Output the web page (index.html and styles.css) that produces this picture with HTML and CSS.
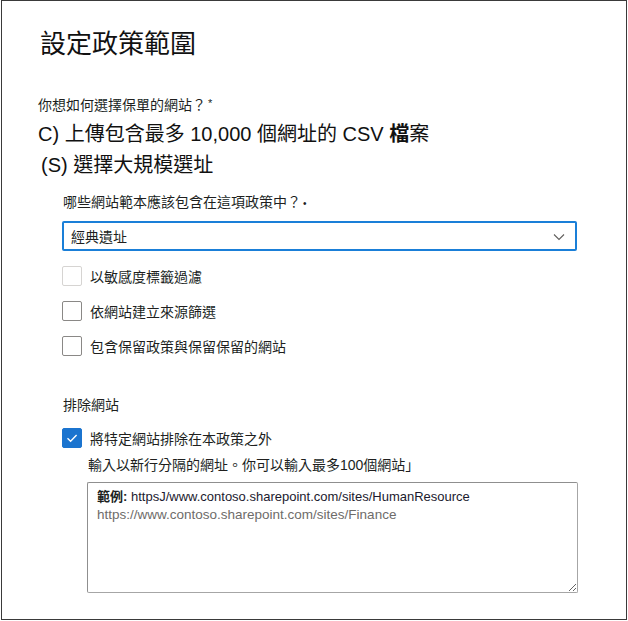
FILE: index.html
```html
<!DOCTYPE html>
<html lang="zh-Hant">
<head>
<meta charset="utf-8">
<title>設定政策範圍</title>
<link rel="stylesheet" href="styles.css">
</head>
<body>
<div class="frame">
  <h1 class="title">設定政策範圍</h1>
  <div class="question">你想如何選擇保單的網站？<span class="req">*</span></div>
  <div class="option">C) 上傳包含最多 10,000 個網址的 CSV <b>檔</b>案</div>
  <div class="option option-s">(S) 選擇大規模選址</div>

  <div class="section">
    <div class="label">哪些網站範本應該包含在這項政策中？<span class="dot">•</span></div>
    <div class="dropdown">
      <span>經典遺址</span>
      <svg class="chev" width="12" height="8" viewBox="0 0 12 8"><path d="M1 1.5 L6 6.5 L11 1.5" fill="none" stroke="#605e5c" stroke-width="1.1"/></svg>
    </div>
    <div class="checks">
      <div class="check-row"><span class="box box-disabled"></span><span>以敏感度標籤過濾</span></div>
      <div class="check-row"><span class="box"></span><span>依網站建立來源篩選</span></div>
      <div class="check-row"><span class="box"></span><span>包含保留政策與保留保留的網站</span></div>
    </div>

    <div class="label exclude">排除網站</div>
    <div class="check-row"><span class="box box-checked"><svg width="14" height="14" viewBox="0 0 14 14"><path d="M2.5 7.3 L5.6 10.2 L11.6 4" fill="none" stroke="#fff" stroke-width="1.4"/></svg></span><span>將特定網站排除在本政策之外</span></div>
    <div class="hint">輸入以新行分隔的網址。你可以輸入最多100個網站」</div>
    <div class="textarea">
      <div class="line1"><b class="ex">範例:</b> httpsJ/www.contoso.sharepoint.com/sites/HumanResource</div>
      <div class="line2">https://www.contoso.sharepoint.com/sites/Finance</div>
    </div>
  </div>
</div>
</body>
</html>
```

FILE: styles.css
```css
* { box-sizing: border-box; }
html, body { margin: 0; padding: 0; background: #fff; }
body {
  font-family: "Liberation Sans", Arial, "Noto Sans CJK TC", sans-serif;
  color: #201f1e;
}
.frame {
  margin-left: 1px;
  width: 626px;
  height: 620px;
  border: 1px solid #3a3a3a;
  padding-left: 36px;
}
.title {
  margin: 26px 0 0 2px;
  height: 34px;
  font-size: 26px;
  line-height: 34px;
  font-weight: normal;
  color: #111;
}
.question {
  margin-top: 34px;
  height: 20px;
  font-size: 14px;
  line-height: 20px;
}
.req { font-size: 11px; line-height: 1; vertical-align: 3px; margin-left: 2px; }
.option {
  margin-top: 5px;
  height: 28px;
  font-size: 20px;
  line-height: 28px;
  color: #111;
}
.option b { font-weight: bold; }
.option-s { margin-top: 3px; margin-left: 3px; }
.section { margin-left: 24px; width: 516px; }
.label {
  margin-top: 13px;
  height: 20px;
  font-size: 14px;
  line-height: 20px;
  margin-left: 1px;
}
.dot { font-size: 10px; line-height: 1; margin-left: 2px; }
.dropdown {
  margin-top: 9px;
  height: 30px;
  width: 515px;
  border: 2px solid #1a7fd8;
  border-radius: 2px;
  display: flex;
  align-items: center;
  justify-content: space-between;
  padding: 0 10px 0 7px;
  font-size: 14px;
}
.chev { margin-top: 1px; }
.checks {
  margin-top: 15px;
  display: flex;
  flex-direction: column;
  gap: 15px;
}
.check-row {
  display: flex;
  align-items: center;
  gap: 8px;
  height: 20px;
  font-size: 14px;
}
.box {
  width: 20px;
  height: 20px;
  border: 1px solid #8a8886;
  border-radius: 2px;
  flex: none;
  display: flex;
  align-items: center;
  justify-content: center;
}
.box-disabled { border-color: #d6d4d2; }
.box-checked { background: #1b74cf; border-color: #1b74cf; }
.exclude { margin-top: 39px; margin-bottom: 13px; }
.hint {
  margin: 7px 0 0 26px;
  height: 20px;
  font-size: 14px;
  line-height: 20px;
}
.textarea {
  margin: 7px 0 0 25px;
  width: 491px;
  height: 111px;
  border: 1px solid #a6a6a6;
  border-top-color: #8f8f8f;
  border-left-color: #8f8f8f;
  border-radius: 2px;
  padding: 5px 9px;
  font-size: 13px;
  line-height: 18px;
  resize: both;
  overflow: auto;
}
.line1 { color: #1b1a2e; }
.ex { font-weight: bold; color: #201f1e; }
.line2 { color: #6e6c6a; font-size: 13.5px; }
```
